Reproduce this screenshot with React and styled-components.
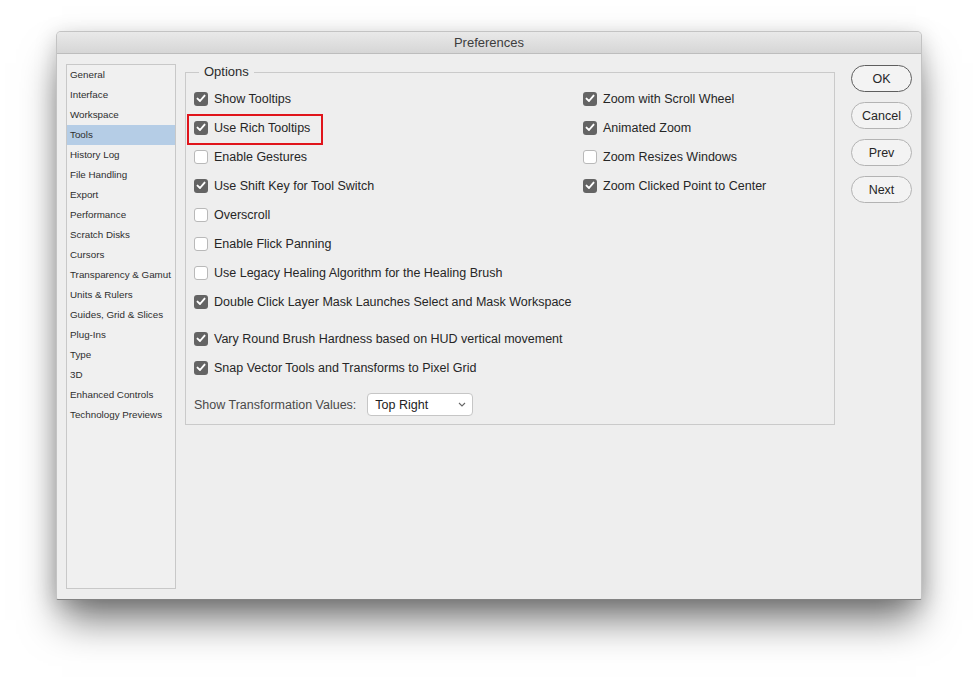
import React from "react";
import styled, { createGlobalStyle, css } from "styled-components";

const Global = createGlobalStyle`
  html, body { margin: 0; padding: 0; background: #ffffff; }
  body { font-family: "Liberation Sans", Arial, sans-serif; color: #262626; }
  * { box-sizing: border-box; }
`;

const Page = styled.div`
  width: 977px;
  height: 679px;
  padding: 31px 0 0 56px;
  overflow: hidden;
`;

const Window = styled.div`
  width: 866px;
  height: 569px;
  background: #eeeeee;
  border-radius: 5px 5px 2px 2px;
  border: 1px solid rgba(0, 0, 0, 0.18);
  border-bottom-color: rgba(0, 0, 0, 0.45);
  box-shadow: 0 26px 38px -6px rgba(0, 0, 0, 0.52), 0 4px 22px rgba(0, 0, 0, 0.18);
  display: flex;
  flex-direction: column;
  overflow: hidden;
`;

const TitleBar = styled.div`
  height: 22px;
  flex: none;
  display: flex;
  align-items: center;
  justify-content: center;
  background: linear-gradient(#e9e9e9, #d6d6d6);
  border-bottom: 1px solid #bdbdbd;
  font-size: 13px;
  color: #3d3d3d;
`;

const Body = styled.div`
  flex: 1;
  display: flex;
  align-items: flex-start;
  padding: 10px 9px 10px 9px;
  min-height: 0;
`;

const Sidebar = styled.ul`
  list-style: none;
  margin: 0;
  padding: 0;
  width: 110px;
  align-self: stretch;
  background: #f0f0f0;
  border: 1px solid #c8c8c8;
`;

const NavItem = styled.li`
  height: 20px;
  line-height: 20px;
  padding-left: 3px;
  font-size: 9.8px;
  color: #2e2e2e;
  white-space: nowrap;
  ${(p) =>
    p.$active &&
    css`
      background: #b5cde6;
    `}
`;

const Group = styled.fieldset`
  flex: 1;
  margin: 0 0 0 9px;
  padding: 4px 8px 8px 8px;
  border: 1px solid #cacaca;
  min-width: 0;
`;

const Legend = styled.legend`
  margin-left: 5px;
  padding: 0 5px;
  font-size: 13px;
  line-height: 16px;
  color: #2b2b2b;
`;

const Columns = styled.div`
  display: grid;
  grid-template-columns: 389px 1fr;
`;

const Column = styled.div`
  display: flex;
  flex-direction: column;
`;

const Section = styled.div`
  display: flex;
  flex-direction: column;
  margin-top: ${(p) => p.$gap || 0}px;
`;

const Row = styled.label`
  position: relative;
  height: 29px;
  display: flex;
  align-items: center;
  gap: 6px;
  font-size: 12.5px;
  color: #262626;
  white-space: nowrap;
  ${(p) =>
    p.$highlight &&
    css`
      &::after {
        content: "";
        position: absolute;
        left: -7px;
        top: 1px;
        width: 132px;
        height: 27px;
        border: 2px solid #e0141b;
      }
    `}
`;

const Box = styled.span`
  width: 14px;
  height: 14px;
  flex: none;
  border-radius: 3px;
  display: flex;
  align-items: center;
  justify-content: center;
  ${(p) =>
    p.$checked
      ? css`
          background: #646464;
        `
      : css`
          background: #ffffff;
          border: 1px solid #b9b9b9;
        `}
`;

const SelectRow = styled.div`
  display: flex;
  align-items: center;
  gap: 11px;
  margin-top: 11px;
`;

const SelectLabel = styled.span`
  font-size: 12.5px;
  color: #4a4a4a;
`;

const Select = styled.div`
  width: 106px;
  height: 23px;
  background: #ffffff;
  border: 1px solid #c6c6c6;
  border-radius: 4px;
  display: flex;
  align-items: center;
  justify-content: space-between;
  padding: 0 6px 0 7px;
  font-size: 12.5px;
  color: #222;
`;

const Buttons = styled.div`
  display: flex;
  flex-direction: column;
  gap: 10px;
  margin-left: 16px;
  margin-top: 1px;
`;

const Button = styled.button`
  width: 61px;
  height: 27px;
  border-radius: 14px;
  background: #f3f3f3;
  border: 1px solid ${(p) => (p.$primary ? "#5e5e5e" : "#b3b3b3")};
  font-family: "Liberation Sans", Arial, sans-serif;
  font-size: 12.5px;
  color: #262626;
  padding: 0;
`;

const Check = () => (
  <svg width="10" height="9" viewBox="0 0 10 9">
    <path d="M1.5 4.6 L4 7 L8.6 1.6" fill="none" stroke="#fff" strokeWidth="1.9" strokeLinecap="round" strokeLinejoin="round" />
  </svg>
);

const Option = ({ checked, label, highlight }) => (
  <Row $highlight={highlight}>
    <Box $checked={checked}>{checked && <Check />}</Box>
    {label}
  </Row>
);

const nav = [
  "General",
  "Interface",
  "Workspace",
  "Tools",
  "History Log",
  "File Handling",
  "Export",
  "Performance",
  "Scratch Disks",
  "Cursors",
  "Transparency & Gamut",
  "Units & Rulers",
  "Guides, Grid & Slices",
  "Plug-Ins",
  "Type",
  "3D",
  "Enhanced Controls",
  "Technology Previews",
];

const left = [
  { label: "Show Tooltips", checked: true },
  { label: "Use Rich Tooltips", checked: true, highlight: true },
  { label: "Enable Gestures", checked: false },
  { label: "Use Shift Key for Tool Switch", checked: true },
  { label: "Overscroll", checked: false },
  { label: "Enable Flick Panning", checked: false },
  { label: "Use Legacy Healing Algorithm for the Healing Brush", checked: false },
  { label: "Double Click Layer Mask Launches Select and Mask Workspace", checked: true },
];

const right = [
  { label: "Zoom with Scroll Wheel", checked: true },
  { label: "Animated Zoom", checked: true },
  { label: "Zoom Resizes Windows", checked: false },
  { label: "Zoom Clicked Point to Center", checked: true },
];

const bottom = [
  { label: "Vary Round Brush Hardness based on HUD vertical movement", checked: true },
  { label: "Snap Vector Tools and Transforms to Pixel Grid", checked: true },
];

export default function App() {
  return (
    <Page>
      <Global />
      <Window>
        <TitleBar>Preferences</TitleBar>
        <Body>
          <Sidebar>
            {nav.map((n) => (
              <NavItem key={n} $active={n === "Tools"}>
                {n}
              </NavItem>
            ))}
          </Sidebar>
          <Group>
            <Legend>Options</Legend>
            <Columns>
              <Column>
                {left.map((o) => (
                  <Option key={o.label} {...o} />
                ))}
              </Column>
              <Column>
                {right.map((o) => (
                  <Option key={o.label} {...o} />
                ))}
              </Column>
            </Columns>
            <Section $gap={8}>
              {bottom.map((o) => (
                <Option key={o.label} {...o} />
              ))}
            </Section>
            <SelectRow>
              <SelectLabel>Show Transformation Values:</SelectLabel>
              <Select>
                Top Right
                <svg width="8" height="5" viewBox="0 0 8 5">
                  <path d="M1 1 L4 4 L7 1" fill="none" stroke="#666" strokeWidth="1.1" />
                </svg>
              </Select>
            </SelectRow>
          </Group>
          <Buttons>
            <Button $primary>OK</Button>
            <Button>Cancel</Button>
            <Button>Prev</Button>
            <Button>Next</Button>
          </Buttons>
        </Body>
      </Window>
    </Page>
  );
}
